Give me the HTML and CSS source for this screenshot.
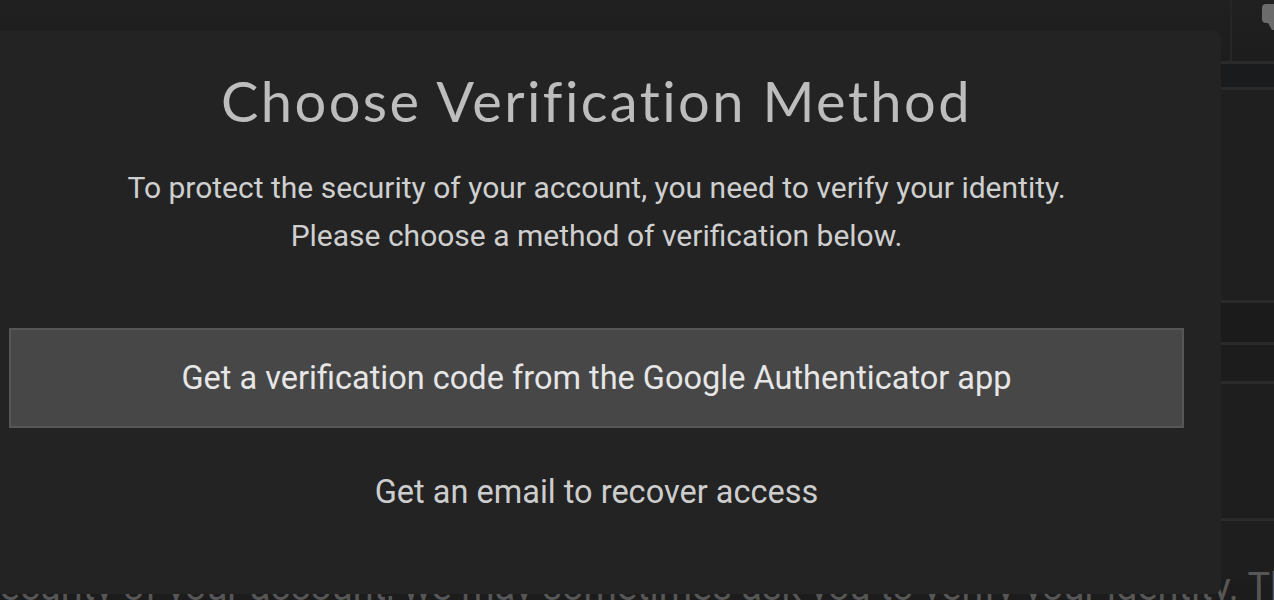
FILE: index.html
```html
<!DOCTYPE html>
<html lang="en">
<head>
<meta charset="utf-8">
<title>Choose Verification Method</title>
<link rel="stylesheet" href="styles.css">
</head>
<body>
<div class="app">
  <header class="topbar">
    <span class="tb-divider"></span>
    <svg class="tb-icon" width="12" height="26" viewBox="0 0 12 26"><path d="M4 0h8v26H10L6 19H4a4 4 0 0 1-4-4V4a4 4 0 0 1 4-4z" fill="#6b6b6b"/></svg>
  </header>
  <div class="list">
    <div class="row r1"></div>
    <div class="row r2"></div>
    <div class="row r3"></div>
    <div class="row r4"></div>
    <div class="row r5"></div>
    <div class="row r6"></div>
  </div>
  <div class="bg-text"><span>To protect the security of your account, we may sometimes ask you to verify your identity. Th</span></div>
</div>

<div class="modal">
  <h1 class="title">Choose Verification Method</h1>
  <p class="lead">To protect the security of your account, you need to verify your identity.<br>Please choose a method of verification below.</p>
  <button class="method primary">Get a verification code from the Google Authenticator app</button>
  <button class="method link">Get an email to recover access</button>
</div>
</body>
</html>
```

FILE: styles.css
```css
html, body {
  margin: 0;
  padding: 0;
  height: 600px;
  overflow: hidden;
  background: #1c1c1c;
  font-family: Roboto, "Liberation Sans", sans-serif;
}

.app {
  display: flex;
  flex-direction: column;
  height: 600px;
}

.topbar {
  height: 61px;
  flex: none;
  background: linear-gradient(#202020, #1d1d1d);
  display: flex;
  justify-content: flex-end;
  align-items: flex-start;
}

.tb-divider {
  width: 2px;
  height: 61px;
  background: #262626;
  margin-right: 30px;
}

.tb-icon {
  margin-top: 4px;
}

.list {
  display: flex;
  flex-direction: column;
  flex: none;
}

.row {
  border-top: 3px solid #2a2a2a;
  background: #1f1f1f;
}

.r1 { height: 23px; background: #1a1b1c; }
.r2 { height: 210px; background: #1f1f1f; }
.r3 { height: 39px; background: #1b1b1b; }
.r4 { height: 36px; background: #1c1c1c; }
.r5 { height: 134px; background: #1e1e1e; }
.r6 { height: 60px; background: #1e1e1e; }

.bg-text {
  display: flex;
  justify-content: flex-end;
  font-size: 38px;
  line-height: 44px;
  color: #565656;
  white-space: nowrap;
  margin-top: -16px;
}

.bg-text span {
  flex: none;
  margin-right: -17px;
}

.modal {
  position: absolute;
  top: 31px;
  left: 0;
  width: 1221px;
  height: 563px;
  box-sizing: border-box;
  padding: 0 37px 0 9px;
  background: #232323;
  border-radius: 0 8px 8px 0;
  display: flex;
  flex-direction: column;
  align-items: center;
}

.title {
  margin: 38px 0 0;
  font-family: Lato, "DejaVu Sans", sans-serif;
  font-weight: 400;
  font-size: 56px;
  line-height: 64px;
  color: #bdbdbd;
  letter-spacing: 2.4px;
}

.lead {
  margin: 31px 0 0;
  font-size: 30px;
  line-height: 48px;
  color: #cfcfcf;
  text-align: center;
}

.method {
  font-family: Roboto, "Liberation Sans", sans-serif;
  font-size: 32.5px;
  cursor: pointer;
}

.primary {
  margin-top: 68px;
  width: 100%;
  height: 100px;
  box-sizing: border-box;
  background: #474747;
  border: 2px solid #565656;
  color: #e6e6e6;
}

.link {
  margin-top: 42px;
  background: none;
  border: none;
  color: #cdcdcd;
  padding: 0;
  line-height: 44px;
}
```
